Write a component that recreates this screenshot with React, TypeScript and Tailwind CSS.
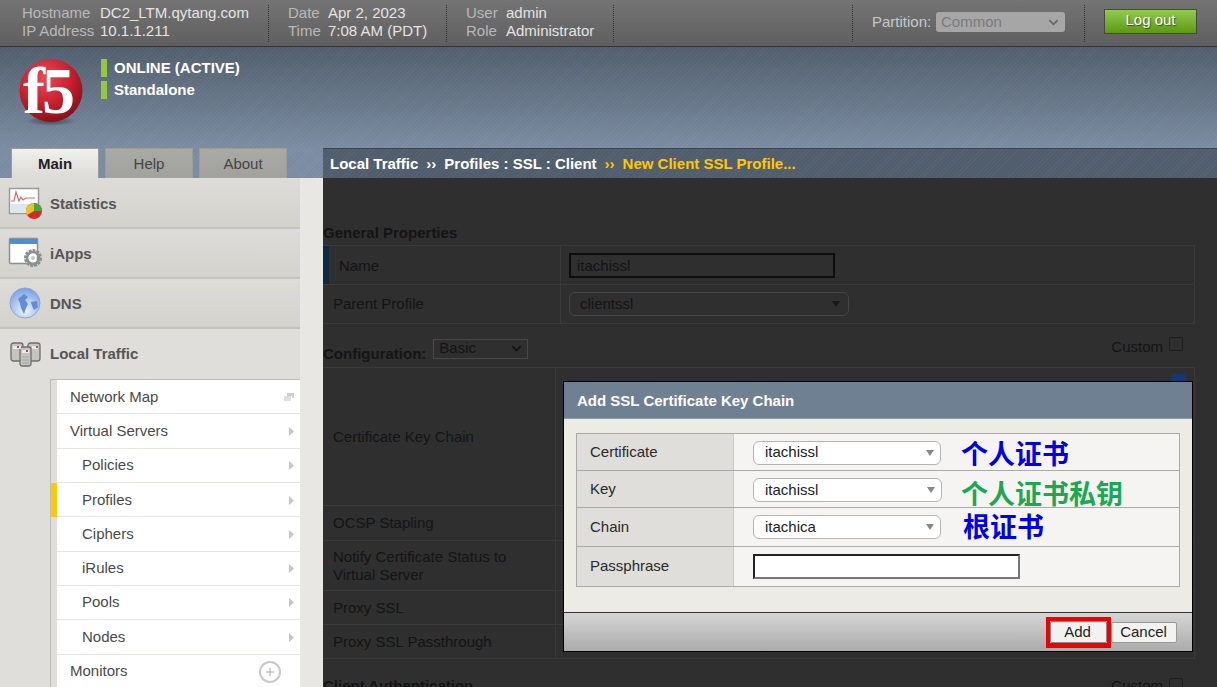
import { ChevronDown, Plus } from "lucide-react";

const stripes =
  "bg-[repeating-linear-gradient(135deg,rgba(255,255,255,0.035)_0px,rgba(255,255,255,0.035)_1px,transparent_1px,transparent_3px)]";

function HeaderPair({ rows, width, labelWidth }: { rows: string[][]; width: string; labelWidth: string }) {
  return (
    <div className={`-mt-[4px] flex flex-col gap-[2px] ${width}`}>
      {rows.map(([label, value]) => (
        <div key={label} className="flex h-[16px] items-center leading-none">
          <span className={`text-[#b9b9b9] ${labelWidth}`}>{label}</span>
          <span className="text-[#e4e4e4]">{value}</span>
        </div>
      ))}
    </div>
  );
}

function Divider() {
  return <div className="h-[37px] border-l border-dotted border-[#2e2e2e]" />;
}

function TopBar() {
  return (
    <div className="flex h-[47px] items-center border-b border-[#333] bg-gradient-to-b from-[#747474] to-[#5f5f5f] pl-[22px] text-[15px]">
      <HeaderPair
        width="w-[246px]"
        labelWidth="w-[78px]"
        rows={[
          ["Hostname", "DC2_LTM.qytang.com"],
          ["IP Address", "10.1.1.211"],
        ]}
      />
      <Divider />
      <div className="w-[19px]" />
      <HeaderPair
        width="w-[158px]"
        labelWidth="w-[40px]"
        rows={[
          ["Date", "Apr 2, 2023"],
          ["Time", "7:08 AM (PDT)"],
        ]}
      />
      <Divider />
      <div className="w-[19px]" />
      <HeaderPair
        width="w-[147px]"
        labelWidth="w-[40px]"
        rows={[
          ["User", "admin"],
          ["Role", "Administrator"],
        ]}
      />
      <Divider />
      <div className="w-[238px]" />
      <Divider />
      <div className="-mt-[2px] ml-[19px] flex items-center gap-[3px]">
        <span className="w-[61px] text-[#c6c9cc]">Partition:</span>
        <div className="flex h-[20px] w-[129px] items-center justify-between rounded-[3px] bg-[#a6a6a6] pl-[5px] pr-[4px] text-[#7b7b7b]">
          Common
          <ChevronDown size={15} strokeWidth={2.5} className="text-[#666]" />
        </div>
      </div>
      <div className="ml-[19px]">
        <Divider />
      </div>
      <div className="-mt-[4px] ml-[19px] flex h-[25px] w-[93px] items-center justify-center border border-[#474747] bg-gradient-to-b from-[#92cb4e] to-[#5b9a09] pb-[1px] text-white [text-shadow:1px_1px_1px_rgba(0,0,0,0.5)]">
        Log out
      </div>
    </div>
  );
}

function F5Logo() {
  return (
    <svg width="66" height="68" viewBox="0 0 66 68">
      <defs>
        <radialGradient id="ball" cx="0.4" cy="0.3" r="0.75">
          <stop offset="0" stopColor="#ea4a55" />
          <stop offset="0.55" stopColor="#c8202f" />
          <stop offset="1" stopColor="#7f0f18" />
        </radialGradient>
        <radialGradient id="shade" cx="0.5" cy="0.5" r="0.5">
          <stop offset="0" stopColor="#222" stopOpacity="0.6" />
          <stop offset="1" stopColor="#222" stopOpacity="0" />
        </radialGradient>
      </defs>
      <ellipse cx="32" cy="62" rx="26" ry="5" fill="url(#shade)" />
      <circle cx="32" cy="31.5" r="31.5" fill="url(#ball)" />
      <text x="4" y="54" fontFamily="'Liberation Serif', serif" fontWeight="700" fontSize="66" fill="#fff" letterSpacing="-3">
        f5
      </text>
    </svg>
  );
}

function StatusLine({ text }: { text: string }) {
  return (
    <div className="flex h-[18px] items-center gap-[7px]">
      <div className="h-[18px] w-[6px] bg-[#94c93d]" />
      <span className="-mt-[2px] text-[15px] font-bold leading-none text-white">{text}</span>
    </div>
  );
}

function Banner() {
  return (
    <div className="h-[101px] bg-gradient-to-b from-[#515e6d] to-[#7b8ca2]">
      <div className={`flex h-full ${stripes}`}>
        <div className="ml-[19px] mt-[12px]">
          <F5Logo />
        </div>
        <div className="ml-[16px] mt-[12px] flex flex-col gap-[4px]">
          <StatusLine text="ONLINE (ACTIVE)" />
          <StatusLine text="Standalone" />
        </div>
      </div>
    </div>
  );
}

function StatsIcon() {
  return (
    <svg width="36" height="32" viewBox="0 0 36 32" className="ml-[2px]">
      <rect x="1.5" y="1.5" width="29" height="25" fill="#fff" stroke="#9a9a9a" strokeWidth="1.5" />
      <rect x="3" y="17" width="26" height="8" fill="#dce6f0" />
      <path d="M3 14h3l2-9 3 9 2-4 2 3 3-2 h9" fill="none" stroke="#d86a6a" strokeWidth="1.2" />
      <circle cx="26" cy="24" r="8" fill="#d62a2a" />
      <path d="M26 24V16a8 8 0 0 1 8 8z" fill="#4aa63c" />
      <path d="M26 24l-7 4a8 8 0 0 1 7-12z" fill="#e8c428" />
    </svg>
  );
}

function AppsIcon() {
  return (
    <svg width="36" height="32" viewBox="0 0 36 32" className="ml-[2px]">
      <rect x="1.5" y="1.5" width="28" height="25" rx="1" fill="#fff" stroke="#8f8f8f" strokeWidth="1.5" />
      <rect x="2" y="2" width="27" height="5" fill="#4a90d9" />
      <circle cx="25" cy="21" r="7" fill="none" stroke="#8a8f90" strokeWidth="4" strokeDasharray="2.6 1" />
      <circle cx="25" cy="21" r="6" fill="none" stroke="#8a8f90" strokeWidth="2.5" />
      <circle cx="25" cy="21" r="2" fill="#c4c8c9" />
    </svg>
  );
}

function GlobeIcon() {
  return (
    <svg width="32" height="32" viewBox="0 0 32 32">
      <defs>
        <radialGradient id="globe" cx="0.5" cy="0.75" r="0.8">
          <stop offset="0" stopColor="#eef4fd" />
          <stop offset="1" stopColor="#6e9ae0" />
        </radialGradient>
      </defs>
      <circle cx="16" cy="16" r="15" fill="url(#globe)" stroke="#8aa6d4" />
      <path d="M9 12l6-5 4 3-3 3 3 4-2 4-2 6-3-6-1-5z" fill="#5f8dd6" />
      <path d="M22 15l6-1 1 6-4 3-2-4z" fill="#5f8dd6" />
    </svg>
  );
}

function ServersIcon() {
  return (
    <svg width="31" height="25" viewBox="0 0 31 25">
      <g fill="#c4c4c1" stroke="#6f6f6f" strokeWidth="1.3">
        <rect x="1" y="1" width="12" height="18" rx="2.5" />
        <rect x="18" y="1" width="12" height="18" rx="2.5" />
        <rect x="10" y="5" width="11" height="19" rx="2.5" />
      </g>
      <g fill="#e8e8e6">
        <rect x="3" y="4" width="8" height="3" />
        <rect x="22" y="4" width="6" height="3" />
        <rect x="12" y="8" width="7" height="3" />
      </g>
      <rect x="7" y="4" width="2" height="2" fill="#c44" />
      <rect x="26" y="4" width="2" height="2" fill="#c44" />
      <rect x="16" y="8" width="2" height="2" fill="#c44" />
      <path d="M12 15h7M12 18h7M12 21h7" stroke="#a5a5a2" />
    </svg>
  );
}

function AccordionRow({ icon, label }: { icon: React.ReactNode; label: string }) {
  return (
    <div className="flex h-[50px] items-center border-b-2 border-[#c4c3bf] bg-gradient-to-b from-[#dddcd8] to-[#d3d2cd]">
      <div className="flex w-[50px] justify-center">{icon}</div>
      <span className="mt-[2px] text-[15px] font-bold text-[#555]">{label}</span>
    </div>
  );
}

function Tabs() {
  const tab = "flex h-[30px] w-[88px] items-center justify-center border border-b-0 border-[#9c9c98] pt-[1px] text-[15px]";
  return (
    <div className="h-[30px] bg-[#7b8ca2]">
      <div className={`flex h-full gap-[6px] pl-[11px] ${stripes}`}>
        <div className={`${tab} bg-gradient-to-b from-[#f0f0ee] to-[#dcdbd7] font-bold text-[#222]`}>Main</div>
        <div className={`${tab} bg-gradient-to-b from-[#a9a9a5] to-[#a1a19d] text-[#444]`}>Help</div>
        <div className={`${tab} bg-gradient-to-b from-[#a9a9a5] to-[#a1a19d] text-[#444]`}>About</div>
      </div>
    </div>
  );
}

const menu = [
  { label: "Network Map", h: "h-[34px] pt-[1px]", indent: false, end: "map" },
  { label: "Virtual Servers", h: "h-[35px]", indent: false, end: "arrow" },
  { label: "Policies", h: "h-[34px]", indent: true, end: "arrow" },
  { label: "Profiles", h: "h-[34px] pt-[1px]", indent: true, end: "arrow", active: true },
  { label: "Ciphers", h: "h-[35px]", indent: true, end: "arrow" },
  { label: "iRules", h: "h-[34px]", indent: true, end: "arrow" },
  { label: "Pools", h: "h-[34px]", indent: true, end: "arrow" },
  { label: "Nodes", h: "h-[35px]", indent: true, end: "arrow" },
  { label: "Monitors", h: "h-[34px]", indent: false, end: "plus" },
];

function MenuRow({ item }: { item: (typeof menu)[number] }) {
  return (
    <div className="flex">
      <div className={`w-[6px] ${item.active ? "bg-[#ffc800]" : "bg-transparent"}`} />
      <div
        className={`flex flex-1 items-center justify-between border-b border-[#e6e6e4] bg-white text-[15px] text-[#4a4a4a] ${item.h} ${
          item.indent ? "pl-[25px]" : "pl-[13px]"
        }`}
      >
        {item.label}
        {item.end === "arrow" && (
          <svg width="5" height="9" viewBox="0 0 5 9" className="mr-[6px]">
            <path d="M0 0l5 4.5L0 9z" fill="#c6c6c6" />
          </svg>
        )}
        {item.end === "map" && (
          <svg width="10" height="8" viewBox="0 0 10 8" className="mr-[6px]">
            <path d="M3 0h7v5H8V3H3z" fill="#d0d0d0" />
            <path d="M0 3h7v5H0z" fill="#e0e0e0" />
          </svg>
        )}
        {item.end === "plus" && (
          <div className="mr-[19px] flex h-[22px] w-[22px] items-center justify-center rounded-full border-2 border-[#c9c9c7]">
            <Plus size={12} strokeWidth={3} className="text-[#c4c4c2]" />
          </div>
        )}
      </div>
    </div>
  );
}

function Sidebar() {
  return (
    <div className="flex w-[323px] shrink-0 flex-col">
      <Tabs />
      <div className="flex flex-1 bg-[#e8e7e3]">
        <div className="flex w-[300px] flex-col bg-[#dfdedb]">
          <div className="h-[1px]" />
          <AccordionRow icon={<StatsIcon />} label="Statistics" />
          <AccordionRow icon={<AppsIcon />} label="iApps" />
          <AccordionRow icon={<GlobeIcon />} label="DNS" />
          <div className="flex h-[50px] items-center">
            <div className="flex w-[50px] justify-center">
              <ServersIcon />
            </div>
            <span className="text-[15px] font-bold text-[#555]">Local Traffic</span>
          </div>
          <div className="ml-[50px] flex flex-col border-l border-t border-[#bcbcb9]">
            {menu.map((item) => (
              <MenuRow key={item.label} item={item} />
            ))}
          </div>
        </div>
      </div>
    </div>
  );
}

function FormRow({
  label,
  h,
  marker,
  narrow,
  children,
}: {
  label: string;
  h: string;
  marker?: boolean;
  narrow?: boolean;
  children?: React.ReactNode;
}) {
  return (
    <div className={`flex border-b border-[#3a3a3a] ${h}`}>
      {marker && <div className="w-[6px] bg-[#0f2a40]" />}
      <div
        className={`flex items-center border-r border-[#3a3a3a] pl-[10px] pr-[30px] text-[15px] leading-[18px] text-[#141414] ${
          marker ? "w-[232px] pt-[2px]" : narrow ? "w-[233px]" : "w-[238px]"
        }`}
      >
        {label}
      </div>
      <div className="flex flex-1 items-center pl-[8px]">{children}</div>
    </div>
  );
}

function MainPanel() {
  return (
    <div className="flex min-w-0 flex-1 flex-col">
      <div className={`flex h-[30px] items-center border-t border-[#3a4653] bg-[#505d6c] pl-[7px] pt-[1px] text-[15px] font-bold text-white ${stripes}`}>
        <span>Local Traffic</span>
        <span className="mx-[8px]">››</span>
        <span>Profiles : SSL : Client</span>
        <span className="mx-[8px] text-[#ffc800]">››</span>
        <span className="text-[#ffc800]">New Client SSL Profile...</span>
      </div>
      <div className="flex-1 overflow-hidden bg-[#2f2f2f] text-[15px] text-[#141414]">
        <div className="mt-[46px] h-[21px] font-bold leading-[17px]">General Properties</div>
        <div className="w-[872px] border-r border-t border-[#3a3a3a]">
          <FormRow label="Name" h="h-[39px]" marker>
            <div className="flex h-[25px] w-[266px] items-center border-2 border-[#0d0d0d] pl-[6px] pt-[2px]">itachissl</div>
          </FormRow>
          <FormRow label="Parent Profile" h="h-[39px]">
            <div className="flex h-[24px] w-[280px] items-center justify-between rounded-[6px] border border-[#444] pl-[10px] pr-[8px]">
              clientssl
              <div className="border-x-[4px] border-t-[6px] border-x-transparent border-t-[#191919]" />
            </div>
          </FormRow>
        </div>
        <div className="flex h-[43px] w-[872px] items-center justify-between">
          <div className="flex items-center gap-[7px]">
            <span className="mt-[18px] font-bold">Configuration:</span>
            <div className="mt-[6px] flex h-[20px] w-[95px] items-center justify-between border border-[#484848] pl-[5px] pr-[3px]">
              Basic
              <ChevronDown size={15} strokeWidth={2.5} className="text-[#111]" />
            </div>
          </div>
          <div className="flex items-center gap-[6px] pr-[12px]">
            <span className="mt-[3px]">Custom</span>
            <div className="-mt-[3px] h-[14px] w-[14px] rounded-[2px] border border-[#1c1c1c]" />
          </div>
        </div>
        <div className="w-[872px] border-r border-t border-[#3a3a3a]">
          <FormRow label="Certificate Key Chain" h="h-[138px]" narrow>
            <div className="ml-auto mr-[8px] mt-[6px] h-[15px] w-[15px] self-start rounded-[2px] bg-[#123a6e]" />
          </FormRow>
          <FormRow label="OCSP Stapling" h="h-[35px]" narrow />
          <FormRow label="Notify Certificate Status to Virtual Server" h="h-[50px]" narrow />
          <FormRow label="Proxy SSL" h="h-[34px]" narrow />
          <FormRow label="Proxy SSL Passthrough" h="h-[34px]" narrow />
        </div>
        <div className="flex w-[872px] items-center justify-between pt-[16px]">
          <span className="font-bold">Client Authentication</span>
          <div className="flex items-center gap-[6px] pr-[12px]">
            <span>Custom</span>
            <div className="-mt-[3px] h-[14px] w-[14px] rounded-[2px] border border-[#1c1c1c]" />
          </div>
        </div>
      </div>
    </div>
  );
}

function DialogSelect({ value, w, nudge }: { value: string; w: string; nudge?: string }) {
  return (
    <div className={`flex h-[24px] items-center justify-between rounded-[6px] border border-[#b5b5b5] bg-white pl-[11px] pr-[6px] text-[#222] ${w} ${nudge ?? ""}`}>
      {value}
      <div className="border-x-[4px] border-t-[6px] border-x-transparent border-t-[#888]" />
    </div>
  );
}

function DialogRow({ label, h, children }: { label: string; h: string; children: React.ReactNode }) {
  return (
    <div className={`flex border-b border-[#aaaaa8] ${h}`}>
      <div className="flex w-[157px] items-center border-r border-[#c9c9c6] bg-[#dfdeda] pl-[13px] text-[#2a2a2a]">{label}</div>
      <div className="flex flex-1 items-center gap-[20px] bg-[#f5f4f2] pl-[19px]">{children}</div>
    </div>
  );
}

function Dialog() {
  const cjk = "font-['Noto_Sans_CJK_SC',sans-serif] text-[27px] font-bold leading-none";
  return (
    <div className="absolute left-[563px] top-[381px] flex h-[271px] w-[630px] flex-col border border-black bg-[#ecebe6] text-[15px]">
      <div className="flex h-[37px] items-center border-b border-[#8d9aa8] bg-[#6f8093] pl-[13px] pt-[3px] font-bold text-white">
        Add SSL Certificate Key Chain
      </div>
      <div className="flex-1 px-[12px] pt-[14px]">
        <div className="border-l border-r border-t border-[#aaaaa8]">
          <DialogRow label="Certificate" h="h-[37px]">
            <DialogSelect value="itachissl" w="w-[188px]" nudge="mt-[1px]" />
            <span className={`${cjk} text-[#0000f0]`}>个人证书</span>
          </DialogRow>
          <DialogRow label="Key" h="h-[37px]">
            <DialogSelect value="itachissl" w="w-[189px]" nudge="mt-[2px]" />
            <span className={`-ml-[1px] mt-[6px] ${cjk} text-[#1aa850]`}>个人证书私钥</span>
          </DialogRow>
          <DialogRow label="Chain" h="h-[39px]">
            <DialogSelect value="itachica" w="w-[188px]" />
            <span className={`mb-[4px] ml-[2px] ${cjk} text-[#0000f0]`}>根证书</span>
          </DialogRow>
          <DialogRow label="Passphrase" h="h-[40px]">
            <div className="h-[25px] w-[267px] border-2 border-b-[#777] border-l-[#222] border-r-[#777] border-t-[#222] bg-white" />
          </DialogRow>
        </div>
      </div>
      <div className="flex h-[39px] items-center justify-end border-t border-[#333] bg-gradient-to-b from-[#d6d6d6] to-[#ababab] pr-[15px]">
        <div className="border-[4px] border-b-[5px] border-[#f00000]">
          <div className="flex h-[22px] w-[57px] items-center justify-center rounded-[2px] border border-[#888] bg-[#f2f2f0] pt-[2px] pr-[2px] text-[#222]">Add</div>
        </div>
        <div className="flex h-[21px] w-[66px] items-center justify-center rounded-[2px] border border-[#999] bg-[#f2f2f0] pt-[1px] pr-[1px] text-[#222]">Cancel</div>
      </div>
    </div>
  );
}

export default function App() {
  return (
    <div className="relative flex h-[687px] w-[1217px] flex-col overflow-hidden bg-[#2f2f2f] font-['Liberation_Sans',Arial,sans-serif]">
      <TopBar />
      <Banner />
      <div className="flex min-h-0 flex-1">
        <Sidebar />
        <MainPanel />
      </div>
      <Dialog />
    </div>
  );
}
